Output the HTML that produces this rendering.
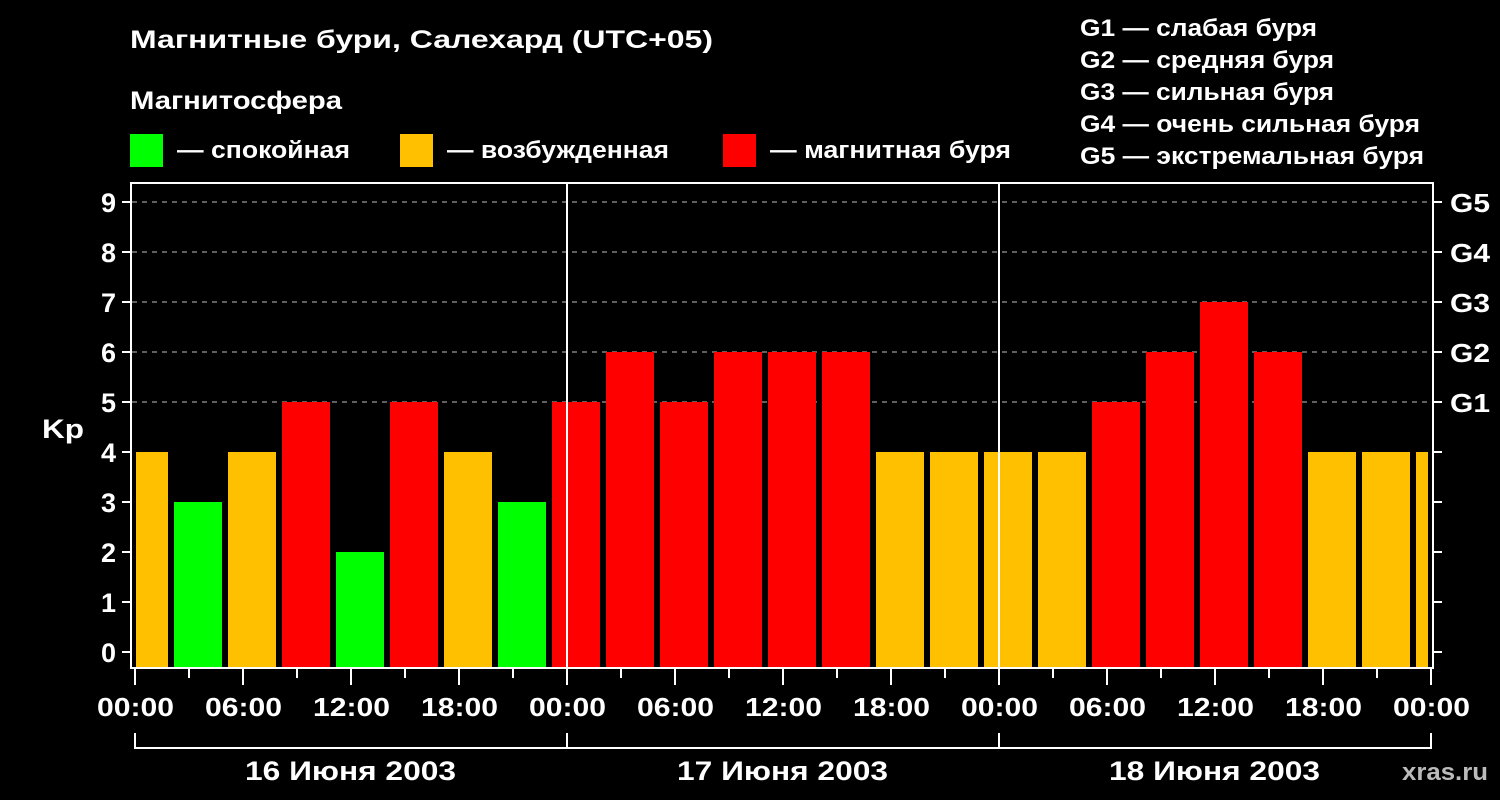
<!DOCTYPE html><html><head><meta charset="utf-8"><style>body{margin:0;background:#000}svg{display:block}text{font-family:"Liberation Sans",sans-serif;font-weight:bold;fill:#fff}</style></head><body>
<svg width="1500" height="800" viewBox="0 0 1500 800">
<rect width="1500" height="800" fill="#000"/>
<text x="130" y="48" font-size="25" textLength="583" lengthAdjust="spacingAndGlyphs">Магнитные бури, Салехард (UTC+05)</text>
<text x="130" y="109" font-size="25" textLength="212" lengthAdjust="spacingAndGlyphs">Магнитосфера</text>
<rect x="130" y="134" width="33" height="33" fill="#00ff00"/><text x="177" y="158" font-size="24" textLength="173" lengthAdjust="spacingAndGlyphs">— спокойная</text>
<rect x="400" y="134" width="33" height="33" fill="#ffc000"/><text x="447" y="158" font-size="24" textLength="222" lengthAdjust="spacingAndGlyphs">— возбужденная</text>
<rect x="723" y="134" width="33" height="33" fill="#ff0000"/><text x="770" y="158" font-size="24" textLength="241" lengthAdjust="spacingAndGlyphs">— магнитная буря</text>
<g font-size="24"><text x="1080" y="36" textLength="237" lengthAdjust="spacingAndGlyphs">G1 — слабая буря</text><text x="1080" y="68" textLength="254" lengthAdjust="spacingAndGlyphs">G2 — средняя буря</text><text x="1080" y="100" textLength="254" lengthAdjust="spacingAndGlyphs">G3 — сильная буря</text><text x="1080" y="132" textLength="340" lengthAdjust="spacingAndGlyphs">G4 — очень сильная буря</text><text x="1080" y="164" textLength="344" lengthAdjust="spacingAndGlyphs">G5 — экстремальная буря</text></g>
<defs><clipPath id="c"><rect x="136" y="184" width="1292" height="484"/></clipPath></defs>
<g stroke="#999" stroke-dasharray="5,5" stroke-width="1.2">
<line x1="132" y1="202" x2="1432" y2="202"/><line x1="132" y1="252" x2="1432" y2="252"/><line x1="132" y1="302" x2="1432" y2="302"/><line x1="132" y1="352" x2="1432" y2="352"/><line x1="132" y1="402" x2="1432" y2="402"/></g>
<g clip-path="url(#c)" id="bars"></g>
<g stroke="#fff" stroke-width="2" fill="none">
<rect x="131" y="183" width="1302" height="485"/>
<line x1="567" y1="183" x2="567" y2="668"/><line x1="999" y1="183" x2="999" y2="668"/>
<path d="M135 733V748H1431V733M567 733V748M999 733V748"/>
</g>
<g id="ticks" stroke="#fff" stroke-width="2"></g>
<g font-size="27" text-anchor="end" id="yl"></g>
<text x="42" y="438" font-size="27" textLength="42" lengthAdjust="spacingAndGlyphs">Kp</text>
<g font-size="26"><text x="1450" y="212" textLength="40" lengthAdjust="spacingAndGlyphs">G5</text><text x="1450" y="262" textLength="40" lengthAdjust="spacingAndGlyphs">G4</text><text x="1450" y="312" textLength="40" lengthAdjust="spacingAndGlyphs">G3</text><text x="1450" y="362" textLength="40" lengthAdjust="spacingAndGlyphs">G2</text><text x="1450" y="412" textLength="40" lengthAdjust="spacingAndGlyphs">G1</text></g>
<g font-size="26" id="xl"></g>
<g font-size="27"><text x="245" y="780" textLength="211" lengthAdjust="spacingAndGlyphs">16 Июня 2003</text><text x="677" y="780" textLength="211" lengthAdjust="spacingAndGlyphs">17 Июня 2003</text><text x="1109" y="780" textLength="211" lengthAdjust="spacingAndGlyphs">18 Июня 2003</text></g>
<text x="1402" y="780" font-size="24" textLength="86" lengthAdjust="spacingAndGlyphs" style="fill:#bbb">xras.ru</text>
</svg>
<script>
var v=[4,3,4,5,2,5,4,3,5,6,5,6,6,6,4,4,4,4,5,6,7,6,4,4,4];
var ns="http://www.w3.org/2000/svg",b=document.getElementById('bars');
v.forEach(function(k,i){var r=document.createElementNS(ns,'rect');r.setAttribute('x',120+54*i);r.setAttribute('width',48);r.setAttribute('y',652-50*k);r.setAttribute('height',16+50*k);r.setAttribute('fill',k<=3?'#00ff00':k==4?'#ffc000':'#ff0000');b.appendChild(r);});
var t=document.getElementById('ticks'),yl=document.getElementById('yl'),xl=document.getElementById('xl'),s='',ys='',xs='';
for(var k=0;k<=9;k++){var y=652-50*k;s+='<line x1="122" y1="'+y+'" x2="131" y2="'+y+'"/><line x1="1433" y1="'+y+'" x2="1442" y2="'+y+'"/>';ys+='<text x="116" y="'+(y+10)+'">'+k+'</text>';}
var lab=['00:00','06:00','12:00','18:00'];
for(var i=0;i<=24;i++){var x=135+54*i;s+='<line x1="'+x+'" y1="668" x2="'+x+'" y2="'+(i%2?678:685)+'"/>';if(i%2==0)xs+='<text x="'+(x-38)+'" y="716" textLength="77" lengthAdjust="spacingAndGlyphs">'+lab[(i/2)%4]+'</text>';}
t.innerHTML=s;yl.innerHTML=ys;xl.innerHTML=xs;
</script>
</body></html>
